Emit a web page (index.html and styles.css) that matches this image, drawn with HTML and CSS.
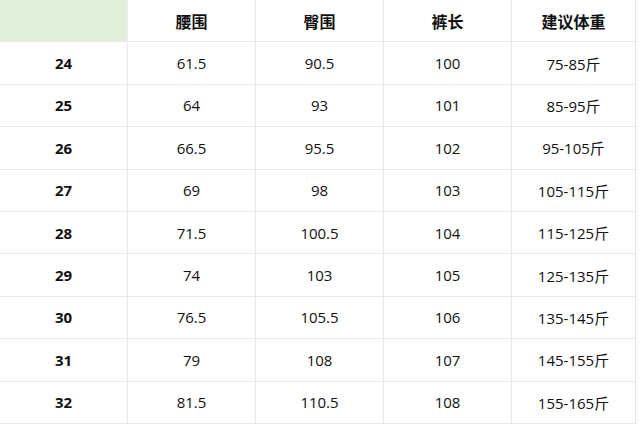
FILE: index.html
```html
<!DOCTYPE html>
<html lang="zh">
<head>
<meta charset="utf-8">
<link rel="stylesheet" href="styles.css">
</head>
<body>
<div class="table">
  <div class="cell head corner"></div>
  <div class="cell head">腰围</div>
  <div class="cell head">臀围</div>
  <div class="cell head">裤长</div>
  <div class="cell head">建议体重</div>

  <div class="cell size">24</div><div class="cell">61.5</div><div class="cell">90.5</div><div class="cell">100</div><div class="cell">75-85斤</div>
  <div class="cell size">25</div><div class="cell">64</div><div class="cell">93</div><div class="cell">101</div><div class="cell">85-95斤</div>
  <div class="cell size">26</div><div class="cell">66.5</div><div class="cell">95.5</div><div class="cell">102</div><div class="cell">95-105斤</div>
  <div class="cell size">27</div><div class="cell">69</div><div class="cell">98</div><div class="cell">103</div><div class="cell">105-115斤</div>
  <div class="cell size">28</div><div class="cell">71.5</div><div class="cell">100.5</div><div class="cell">104</div><div class="cell">115-125斤</div>
  <div class="cell size">29</div><div class="cell">74</div><div class="cell">103</div><div class="cell">105</div><div class="cell">125-135斤</div>
  <div class="cell size">30</div><div class="cell">76.5</div><div class="cell">105.5</div><div class="cell">106</div><div class="cell">135-145斤</div>
  <div class="cell size">31</div><div class="cell">79</div><div class="cell">108</div><div class="cell">107</div><div class="cell">145-155斤</div>
  <div class="cell size">32</div><div class="cell">81.5</div><div class="cell">110.5</div><div class="cell">108</div><div class="cell">155-165斤</div>
</div>
</body>
</html>
```
FILE: styles.css
```css
html, body {
  margin: 0;
  padding: 0;
  background: #ffffff;
}
.table {
  display: grid;
  grid-template-columns: 128px 128px 128px 128px 123px;
  grid-auto-rows: 42.4px;
  width: 635px;
  font-family: "Open Sans", "Noto Sans CJK SC", sans-serif;
  font-size: 15px;
  color: #111111;
  border-right: 1px solid #e6e6e6;
}
.cell {
  display: flex;
  align-items: center;
  justify-content: center;
  border-right: 1px solid #e8e8e8;
  border-bottom: 1px solid #e8e8e8;
}
.cell:nth-child(5n) {
  border-right: none;
}
.head {
  font-family: "Noto Sans CJK SC", sans-serif;
  font-weight: 700;
  font-size: 16px;
}
.corner {
  background: #e2efda;
  border-right-color: #ededed;
}
.size {
  font-weight: 700;
}
```
